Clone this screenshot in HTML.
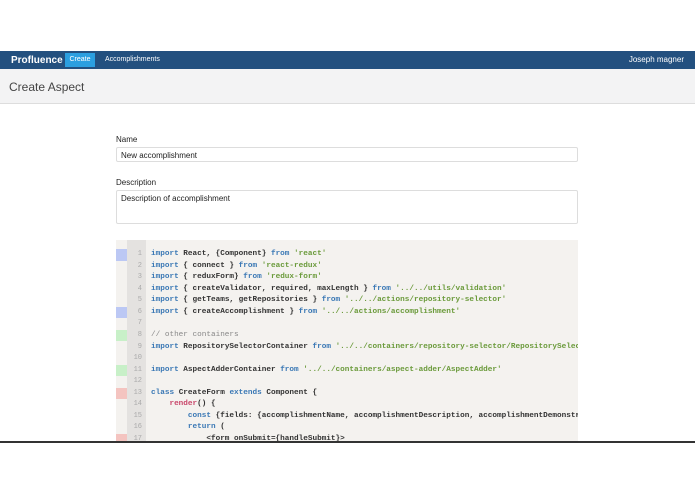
<!DOCTYPE html>
<html><head><style>
*{margin:0;padding:0;box-sizing:border-box}
body{width:695px;height:494px;background:#fff;font-family:"Liberation Sans",sans-serif;position:relative;overflow:hidden}
.nav{position:absolute;top:51px;left:0;width:695px;height:18px;background:#23507f;color:#fff}
.brand{position:absolute;left:11px;top:4px;font-size:10px;font-weight:bold}
.create{position:absolute;left:65px;top:2px;width:30px;height:14px;background:#2b9fe0;font-size:7px;text-align:center;line-height:14px}
.acc{position:absolute;left:105px;top:5px;font-size:7px}
.user{position:absolute;right:11px;top:4px;font-size:8px}
.hdr{position:absolute;top:69px;left:0;width:695px;height:35px;background:#f3f3f4;border-bottom:1px solid #ddd}
.hdr span{position:absolute;left:9px;top:11px;font-size:12px;color:#444}
.lbl{position:absolute;left:116px;font-size:8px;color:#222}
.inp{position:absolute;left:116px;width:462px;border:1px solid #ddd;border-radius:2px;font-size:8px;color:#222;padding:3px 4px}
.code{position:absolute;left:116px;top:240px;width:462px;height:201px;background:#f4f2ef;overflow:hidden}
.gut{position:absolute;left:11px;top:0;width:19px;height:201px;background:#e4e2e0}
.row{position:absolute;left:0;height:11.56px;width:462px;font-family:"Liberation Mono",monospace;font-size:7.7px;line-height:11.56px;white-space:pre;color:#333;font-weight:bold}
.m{position:absolute;left:0;top:0;width:11px;height:100%}
.n{position:absolute;left:11px;width:19px;text-align:right;padding-right:4px;color:#aaa;font-weight:normal;font-size:7px}
.t{position:absolute;left:35px}
.k{color:#3a78b5}.s{color:#6a9a3a}.c{color:#888;font-weight:normal}.r{color:#c9476b}
.bar{position:absolute;left:0;top:441px;width:695px;height:2px;background:#333}
</style></head><body>
<div class="nav"><span class="brand">Profluence</span><span class="create">Create</span><span class="acc">Accomplishments</span><span class="user">Joseph magner</span></div>
<div class="hdr"><span>Create Aspect</span></div>
<div class="lbl" style="top:135px">Name</div>
<div class="inp" style="top:147px;height:15px">New accomplishment</div>
<div class="lbl" style="top:178px">Description</div>
<div class="inp" style="top:190px;height:34px">Description of accomplishment</div>
<div class="code"><div class="gut"></div>
<div class="row" style="top:9px"><div class="m" style="background:#bcc8f4"></div><span class="n">1</span><span class="t"><span class="k">import</span> React, {Component} <span class="k">from</span> <span class="s">'react'</span></span></div>
<div class="row" style="top:20.6px"><span class="n">2</span><span class="t"><span class="k">import</span> { connect } <span class="k">from</span> <span class="s">'react-redux'</span></span></div>
<div class="row" style="top:32.1px"><span class="n">3</span><span class="t"><span class="k">import</span> { reduxForm} <span class="k">from</span> <span class="s">'redux-form'</span></span></div>
<div class="row" style="top:43.7px"><span class="n">4</span><span class="t"><span class="k">import</span> { createValidator, required, maxLength } <span class="k">from</span> <span class="s">'../../utils/validation'</span></span></div>
<div class="row" style="top:55.2px"><span class="n">5</span><span class="t"><span class="k">import</span> { getTeams, getRepositories } <span class="k">from</span> <span class="s">'../../actions/repository-selector'</span></span></div>
<div class="row" style="top:66.8px"><div class="m" style="background:#bcc8f4"></div><span class="n">6</span><span class="t"><span class="k">import</span> { createAccomplishment } <span class="k">from</span> <span class="s">'../../actions/accomplishment'</span></span></div>
<div class="row" style="top:78.4px"><span class="n">7</span></div>
<div class="row" style="top:89.9px"><div class="m" style="background:#c8f0c8"></div><span class="n">8</span><span class="t c">// other containers</span></div>
<div class="row" style="top:101.5px"><span class="n">9</span><span class="t"><span class="k">import</span> RepositorySelectorContainer <span class="k">from</span> <span class="s">'../../containers/repository-selector/RepositorySelectorContainer'</span></span></div>
<div class="row" style="top:113px"><span class="n">10</span></div>
<div class="row" style="top:124.6px"><div class="m" style="background:#c8f0c8"></div><span class="n">11</span><span class="t"><span class="k">import</span> AspectAdderContainer <span class="k">from</span> <span class="s">'../../containers/aspect-adder/AspectAdder'</span></span></div>
<div class="row" style="top:136.2px"><span class="n">12</span></div>
<div class="row" style="top:147.7px"><div class="m" style="background:#f4c4c0"></div><span class="n">13</span><span class="t"><span class="k">class</span> CreateForm <span class="k">extends</span> Component {</span></div>
<div class="row" style="top:159.3px"><span class="n">14</span><span class="t">    <span class="r">render</span>() {</span></div>
<div class="row" style="top:170.8px"><span class="n">15</span><span class="t">        <span class="k">const</span> {fields: {accomplishmentName, accomplishmentDescription, accomplishmentDemonstration}}</span></div>
<div class="row" style="top:182.4px"><span class="n">16</span><span class="t">        <span class="k">return</span> (</span></div>
<div class="row" style="top:194px"><div class="m" style="background:#f4c4c0"></div><span class="n">17</span><span class="t">            &lt;form onSubmit={handleSubmit}&gt;</span></div>
</div>
<div class="bar"></div>
</body></html>
